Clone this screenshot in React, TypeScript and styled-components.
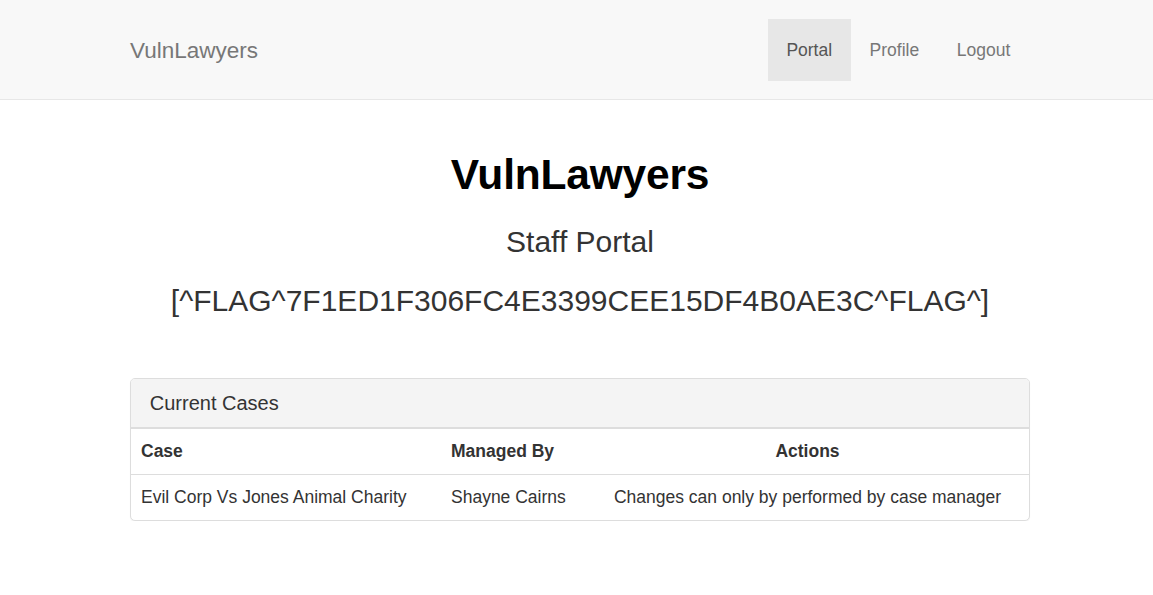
import React from "react";
import styled, { createGlobalStyle } from "styled-components";

const GlobalStyle = createGlobalStyle`
  html, body {
    margin: 0;
    padding: 0;
    background: #ffffff;
  }
  body {
    font-family: "Liberation Sans", Arial, Helvetica, sans-serif;
    font-size: 17.5px;
    line-height: 1.42857;
    color: #333333;
  }
  * { box-sizing: border-box; }
`;

const Navbar = styled.nav`
  background: #f8f8f8;
  border-bottom: 1px solid #e7e7e7;
  padding: 19px 0 18px;
`;

const NavInner = styled.div`
  width: 900px;
  margin-left: 130px;
  display: flex;
  align-items: center;
  justify-content: space-between;
  height: 62px;
`;

const Brand = styled.a`
  font-size: 22.5px;
  line-height: 25px;
  color: #777777;
  text-decoration: none;
`;

const NavList = styled.ul`
  list-style: none;
  margin: 0 1px 0 0;
  padding: 0;
  display: flex;
  height: 100%;
`;

const NavLink = styled.a<{ $active?: boolean }>`
  display: flex;
  align-items: center;
  height: 62px;
  padding: 0 18.75px;
  font-size: 17.5px;
  line-height: 25px;
  text-decoration: none;
  color: ${(p) => (p.$active ? "#555555" : "#777777")};
  background: ${(p) => (p.$active ? "#e7e7e7" : "transparent")};
`;

const Main = styled.main`
  width: 900px;
  margin-left: 130px;
  padding-top: 51px;
  display: flex;
  flex-direction: column;
  align-items: stretch;
`;

const Title = styled.h1`
  margin: 0;
  text-align: center;
  font-size: 42.5px;
  line-height: 47px;
  font-weight: 700;
  letter-spacing: -0.2px;
  color: #000000;
`;

const SubTitle = styled.h3<{ $gap: number }>`
  margin: ${(p) => p.$gap}px 0 0;
  text-align: center;
  font-size: 30px;
  line-height: 33px;
  font-weight: 400;
  color: #333333;
`;

const Panel = styled.section`
  margin-top: 61px;
  border: 1px solid #dddddd;
  border-radius: 5px;
  background: #ffffff;
  box-shadow: 0 1px 1px rgba(0, 0, 0, 0.05);
  overflow: hidden;
`;

const PanelHeading = styled.div`
  background: #f4f4f4;
  border-bottom: 2px solid #dddddd;
  padding: 12.5px 18.75px 13.5px;
`;

const PanelTitle = styled.h3`
  margin: 0;
  font-size: 20px;
  line-height: 22px;
  font-weight: 400;
  color: #333333;
`;

const Table = styled.table`
  width: 100%;
  border-collapse: collapse;
  border-spacing: 0;
  table-layout: fixed;
`;

const HeadCell = styled.th<{ $center?: boolean }>`
  padding: 10px;
  line-height: 25px;
  font-size: 17.5px;
  font-weight: 700;
  color: #333333;
  text-align: ${(p) => (p.$center ? "center" : "left")};
  border-bottom: 1px solid #dddddd;
`;

const Cell = styled.td<{ $center?: boolean }>`
  padding: 10px;
  line-height: 25px;
  font-size: 17.5px;
  color: #333333;
  text-align: ${(p) => (p.$center ? "center" : "left")};
`;

export default function App() {
  return (
    <>
      <GlobalStyle />
      <Navbar>
        <NavInner>
          <Brand href="#">VulnLawyers</Brand>
          <NavList>
            <li>
              <NavLink href="#" $active>
                Portal
              </NavLink>
            </li>
            <li>
              <NavLink href="#">Profile</NavLink>
            </li>
            <li>
              <NavLink href="#">Logout</NavLink>
            </li>
          </NavList>
        </NavInner>
      </Navbar>
      <Main>
        <Title>VulnLawyers</Title>
        <SubTitle $gap={27}>Staff Portal</SubTitle>
        <SubTitle $gap={26}>[^FLAG^7F1ED1F306FC4E3399CEE15DF4B0AE3C^FLAG^]</SubTitle>
        <Panel>
          <PanelHeading>
            <PanelTitle>Current Cases</PanelTitle>
          </PanelHeading>
          <Table>
            <colgroup>
              <col style={{ width: 310 }} />
              <col style={{ width: 145 }} />
              <col />
            </colgroup>
            <thead>
              <tr>
                <HeadCell>Case</HeadCell>
                <HeadCell>Managed By</HeadCell>
                <HeadCell $center>Actions</HeadCell>
              </tr>
            </thead>
            <tbody>
              <tr>
                <Cell>Evil Corp Vs Jones Animal Charity</Cell>
                <Cell>Shayne Cairns</Cell>
                <Cell $center>Changes can only by performed by case manager</Cell>
              </tr>
            </tbody>
          </Table>
        </Panel>
      </Main>
    </>
  );
}
